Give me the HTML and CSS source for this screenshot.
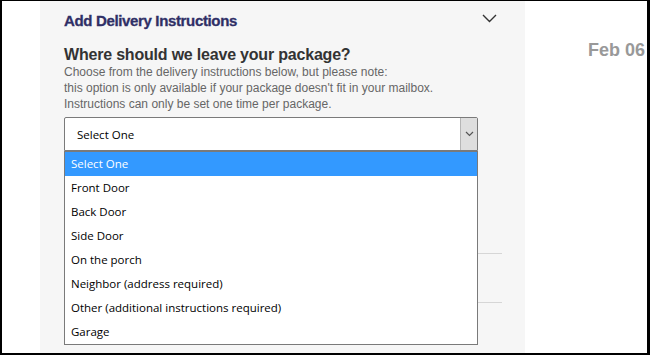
FILE: index.html
```html
<!DOCTYPE html>
<html lang="en">
<head>
    <meta charset="UTF-8">
    <meta name="viewport" content="width=device-width, initial-scale=1.0">
    <title>Add Delivery Instructions</title>
    <link rel="stylesheet" href="styles.css">
</head>
<body>
    <div class="frame">
        <div class="gutter"></div>
        <div class="panel">
            <div class="panel-head">
                <h2>Add Delivery Instructions</h2>
                <svg class="collapse" width="15" height="9" viewBox="0 0 15 9">
                    <polyline points="1,1 7.5,7.5 14,1" fill="none" stroke="#333" stroke-width="1.4"/>
                </svg>
            </div>
            <h3>Where should we leave your package?</h3>
            <p class="note">
                Choose from the delivery instructions below, but please note:<br>
                this option is only available if your package doesn't fit in your mailbox.<br>
                Instructions can only be set one time per package.
            </p>
            <div class="select-wrap">
                <div class="select">
                    <span class="select-value">Select One</span>
                    <span class="select-btn">
                        <svg width="9" height="6" viewBox="0 0 9 6">
                            <polyline points="1,1 4.5,4.5 8,1" fill="none" stroke="#555" stroke-width="1.2"/>
                        </svg>
                    </span>
                </div>
                <ul class="listbox">
                    <li class="active">Select One</li>
                    <li>Front Door</li>
                    <li>Back Door</li>
                    <li>Side Door</li>
                    <li>On the porch</li>
                    <li>Neighbor (address required)</li>
                    <li>Other (additional instructions required)</li>
                    <li>Garage</li>
                </ul>
            </div>
            <div class="details">
                <div class="detail-row"></div>
                <div class="detail-row"></div>
            </div>
        </div>
        <div class="aside">
            <div class="date">Feb 06</div>
        </div>
    </div>
</body>
</html>
```

FILE: styles.css
```css
body {
    margin: 0;
    padding: 0;
    font-family: 'Liberation Sans', Arial, sans-serif;
    background: #fff;
}
.frame {
    width: 650px;
    height: 355px;
    box-sizing: border-box;
    border-style: solid;
    border-color: #000;
    border-width: 1px 3px 2px 2px;
    display: flex;
    overflow: hidden;
    background: #fff;
}
.gutter {
    width: 38px;
    flex: none;
}
.panel {
    width: 485px;
    flex: none;
    box-sizing: border-box;
    background: #f6f6f6;
    padding: 10px 23px 0 24px;
}
.panel-head {
    display: flex;
    justify-content: space-between;
    align-items: flex-start;
}
.panel-head h2 {
    margin: 0;
    font-size: 15px;
    line-height: 20px;
    font-weight: bold;
    letter-spacing: -0.35px;
    color: #2f2f66;
    -webkit-text-stroke: 0.3px #2f2f66;
}
.collapse {
    margin: 3px 5px 0 0;
}
h3 {
    margin: 14px 0 0;
    font-size: 16px;
    line-height: 19px;
    font-weight: bold;
    letter-spacing: -0.2px;
    color: #333;
}
.note {
    margin: 0;
    font-size: 12px;
    line-height: 16px;
    color: #666;
}
.select-wrap {
    position: relative;
    width: 414px;
    margin-top: 5px;
}
.select {
    height: 34px;
    box-sizing: border-box;
    border: 1px solid #7a7a7a;
    border-radius: 2px 2px 0 0;
    background: #fff;
    display: flex;
    align-items: center;
    font-family: 'Open Sans', sans-serif;
    font-size: 11.5px;
    color: #000;
}
.select-value {
    flex: 1;
    padding-left: 12px;
}
.select-btn {
    width: 16px;
    align-self: stretch;
    background: #dedede;
    border-left: 1px solid #b5b5b5;
    display: flex;
    align-items: center;
    justify-content: center;
}
.listbox {
    position: absolute;
    top: 34px;
    left: 0;
    width: 414px;
    box-sizing: border-box;
    margin: 0;
    padding: 0;
    list-style: none;
    background: #fff;
    border: 1px solid #7a7a7a;
    z-index: 2;
    font-family: 'Open Sans', sans-serif;
    font-size: 11.5px;
    color: #000;
}
.listbox li {
    height: 24px;
    line-height: 24px;
    padding-left: 6px;
}
.listbox li.active {
    background: #3399ff;
    color: #fff;
}
.details {
    padding-top: 54px;
}
.detail-row {
    height: 48px;
    border-bottom: 1px solid #d6d6d6;
}
.aside {
    flex: 1;
    padding: 38px 2px 0 0;
    text-align: right;
}
.date {
    font-size: 18px;
    line-height: 22px;
    font-weight: bold;
    color: #999;
}
```
